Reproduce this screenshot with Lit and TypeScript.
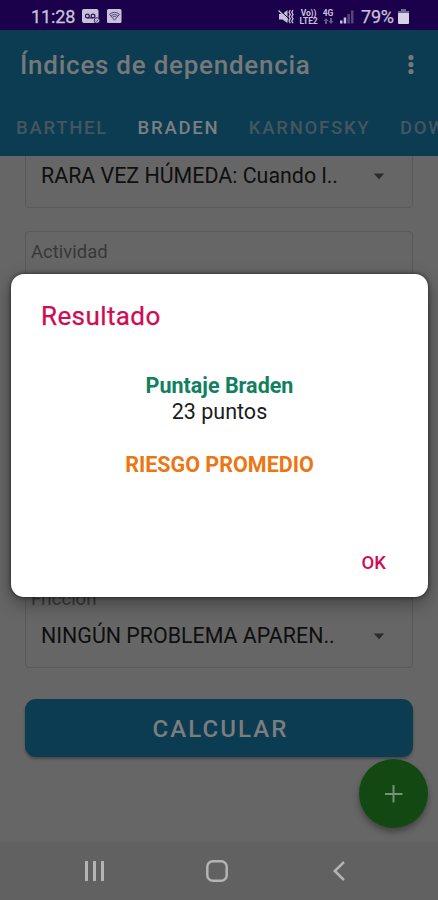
import { LitElement, html, css } from "lit";
import { customElement } from "lit/decorators.js";

@customElement("status-bar")
class StatusBar extends LitElement {
  static styles = css`
    :host { display: flex; height: 30px; background: #1b004b; color: #c9c0da; align-items: center; box-sizing: border-box; padding: 3px 29px 0 31px; font-size: 18px; }
    .time { width: 51px; letter-spacing: -0.1px; -webkit-text-stroke: 0.3px; }
    .left { display: flex; gap: 7px; }
    .right { margin-left: auto; display: flex; align-items: center; }
    .tiny { font-size: 8.5px; line-height: 8px; font-weight: 700; text-align: center; letter-spacing: -0.1px; white-space: nowrap; }
    .tiny span { display: block; height: 8px; }
    .volte { width: 21px; margin-left: 4px; }
    .net { width: 14px; margin-left: 2px; }
    .arrows { opacity: 0.45; display: block; margin: 1px auto 0; }
    .signal { margin-left: 5px; }
    .pct { margin-left: 7px; width: 35px; letter-spacing: -0.2px; -webkit-text-stroke: 0.25px; }
    .battery { margin-left: 2px; }
    svg { display: block; }
  `;
  render() {
    return html`
      <span class="time">11:28</span>
      <div class="left">
        <svg width="18" height="15" viewBox="0 0 18 15">
          <rect width="16.5" height="14" rx="2" fill="#c9c0da" />
          <circle cx="5.400" cy="7" r="1.900" fill="none" stroke="#2b155a" stroke-width="1.200" />
          <circle cx="11" cy="7" r="1.900" fill="none" stroke="#2b155a" stroke-width="1.200" />
          <path d="M5.400 8.900H11" stroke="#2b155a" stroke-width="1.100" />
          <circle cx="15" cy="11.500" r="2.800" fill="#c9c0da" stroke="#1b004b" stroke-width=".8" />
          <path d="M13.800 11.500l1 1 1.500-2" fill="none" stroke="#2b155a" stroke-width=".7" />
        </svg>
        <svg width="15" height="15" viewBox="0 0 15 15">
          <rect width="14.500" height="14" rx="1.500" fill="#c9c0da" />
          <path d="M2.500 5.300q5-4 10 0L7.500 11.200zM4.300 6.500q3.200-2.300 6.400 0M5.700 8q1.800-1.200 3.600 0" fill="none" stroke="#55427b" stroke-width="1" />
        </svg>
      </div>
      <div class="right">
        <svg width="16" height="15" viewBox="0 0 16 15" fill="none" stroke="#c9c0da">
          <path d="M1 5h3.500L9.500 1v13L4.500 10.500H1z" fill="#c9c0da" stroke="none" />
          <path d="M2 1.200l8 7.600" stroke="#1b004b" stroke-width="1" />
          <path d="M.6 1.500l9.500 9.500" stroke-width="1.300" />
          <path d="M12.300 1l-1.200 2.200 1.200 2.200-1.200 2.200 1.200 2.200-1.200 2.200 1.200 2.200M15 1l-1.200 2.200L15 5.400l-1.200 2.200L15 9.800l-1.200 2.200L15 14.200" stroke-width="1.300" />
        </svg>
        <div class="tiny volte"><span>Vo))</span><span>LTE2</span></div>
        <div class="tiny net"><span>4G</span>
          <svg class="arrows" width="11" height="6" viewBox="0 0 11 6" fill="#c9c0da"><path d="M3 0l2.500 3H4v3H2V3H.5zM8 6L5.500 3H7V0h2v3h1.500z" /></svg>
        </div>
        <svg class="signal" width="14" height="14" viewBox="0 0 14 14" fill="#c9c0da">
          <rect x="0" y="10.500" width="2.500" height="3" /><rect x="3.700" y="7.500" width="2.500" height="6" />
          <rect x="7.400" y="4" width="2.500" height="9.500" opacity=".35" /><rect x="11" y="0.500" width="2.500" height="13" opacity=".35" />
        </svg>
        <span class="pct">79%</span>
        <svg class="battery" width="11" height="15" viewBox="0 0 11 15">
          <path d="M3 0h5v2h3v3H0V2h3z" fill="#75668f" /><rect y="4" width="11" height="11" rx="1" fill="#d8d0e6" />
        </svg>
      </div>`;
  }
}

@customElement("select-field")
class SelectField extends LitElement {
  static properties = { label: {}, value: {} };
  declare label: string;
  declare value: string;
  static styles = css`
    :host { display: flex; flex-direction: column; box-sizing: border-box; height: 90px; border: 1.500px solid #595959; border-radius: 4px; padding: 8px 27px 0 5px; color: #0f0f0f; }
    .label { font-size: 18.500px; line-height: 24px; height: 24px; color: #383838; }
    .row { display: flex; align-items: center; justify-content: space-between; padding-left: 10px; margin-top: 11px; font-size: 21.400px; line-height: 28px; white-space: nowrap; }
    svg { display: block; }
  `;
  render() {
    return html`
      <div class="label">${this.label}</div>
      <div class="row"><span>${this.value}</span>
        <svg width="12" height="7" viewBox="0 0 12 7"><path d="M.8.5h10.400L6 6.200z" fill="#2b2b2b" /></svg>
      </div>`;
  }
}

@customElement("result-dialog")
class ResultDialog extends LitElement {
  static styles = css`
    :host { display: flex; flex-direction: column; box-sizing: border-box; width: 417px; height: 323px; background: #fff; border-radius: 13px; padding: 25px 42px 20px 30px; box-shadow: 0 7px 18px rgba(0,0,0,.35), 0 0 4px rgba(0,0,0,.6); }
    .title { font-size: 26px; line-height: 34px; color: #cf0b52; letter-spacing: 0.400px; -webkit-text-stroke: 0.250px; }
    .body { text-align: center; font-size: 21.500px; line-height: 26.400px; margin: 40px -12px 0 0; color: #1c1c1c; }
    .strong { font-weight: 700; color: #11805f; }
    .risk { font-weight: 700; color: #ed7614; margin-top: 26.400px; }
    .ok { margin-top: auto; align-self: flex-end; font-size: 18.500px; line-height: 28px; font-weight: 500; color: #cf0b52; }
  `;
  render() {
    return html`
      <div class="title">Resultado</div>
      <div class="body">
        <div class="strong">Puntaje Braden</div>
        <div class="points">23 puntos</div>
        <div class="risk">RIESGO PROMEDIO</div>
      </div>
      <div class="ok">OK</div>`;
  }
}

@customElement("app-root")
class AppRoot extends LitElement {
  static styles = css`
    :host { display: flex; flex-direction: column; position: relative; width: 438px; height: 900px; overflow: hidden; background: #666; font-family: Roboto, "Liberation Sans", sans-serif; }
    .header { height: 126px; background: #0c3c52; color: #777879; display: flex; flex-direction: column; }
    .bar { display: flex; justify-content: space-between; align-items: center; height: 70px; padding: 0 24px 0 20px; font-size: 26px; font-weight: 500; }
    .title { letter-spacing: 0.740px; }
    .tabs { display: flex; gap: 29.500px; padding-left: 16px; height: 56px; align-items: center; font-size: 18.500px; font-weight: 500; letter-spacing: 1.750px; white-space: nowrap; overflow: hidden; }
    .tab { color: #44565f; }
    .tab.active { color: #7d7f80; }
    .content { flex: 1; display: flex; flex-direction: column; gap: 23px; padding: 0 25px; overflow: hidden; min-height: 0; }
    select-field { flex: none; }
    .first { margin-top: -38px; }
    .last { margin-top: 234px; }
    .button { flex: none; margin-top: 8px; height: 58px; box-sizing: border-box; padding: 2px 0 0 3px; border-radius: 11px; background: #0c3c52; color: #7b7d7e; display: flex; align-items: center; justify-content: center; font-size: 24px; font-weight: 500; letter-spacing: 2.050px; box-shadow: 0 2px 3px rgba(0,0,0,.3); }
    .nav { height: 58px; background: #616161; display: flex; align-items: center; padding: 0 0 0 83px; gap: 101px; box-sizing: border-box; }
    .back { margin-left: 3px; }
    .fab { position: absolute; left: 359px; top: 759px; width: 69px; height: 69px; border-radius: 50%; background: #124812; display: flex; align-items: center; justify-content: center; box-shadow: 0 4px 6px rgba(0,0,0,.35); }
    result-dialog { position: absolute; left: 11px; top: 274px; }
    svg { display: block; }
  `;
  render() {
    return html`
      <status-bar></status-bar>
      <div class="header">
        <div class="bar"><span class="title">Índices de dependencia</span>
          <svg width="6" height="20" viewBox="0 0 6 20" fill="#777879"><circle cx="3" cy="2.500" r="2.600" /><circle cx="3" cy="9.500" r="2.600" /><circle cx="3" cy="16.500" r="2.600" /></svg>
        </div>
        <div class="tabs">
          <span class="tab">BARTHEL</span><span class="tab active">BRADEN</span><span class="tab">KARNOFSKY</span><span class="tab">DOW</span>
        </div>
      </div>
      <div class="content">
        <select-field class="first" label="" value="RARA VEZ HÚMEDA: Cuando l.."></select-field>
        <select-field label="Actividad" value=""></select-field>
        <select-field class="last" label="Fricción" value="NINGÚN PROBLEMA APAREN.."></select-field>
        <div class="button">CALCULAR</div>
      </div>
      <div class="nav">
        <svg width="22" height="22" viewBox="0 0 22 22" fill="none" stroke="#b4b4b4" stroke-width="3"><path d="M3.500 1v20M11.500 1v20M19.500 1v20" /></svg>
        <svg width="22" height="22" viewBox="0 0 22 22" fill="none" stroke="#b4b4b4" stroke-width="2.500"><rect x="1.300" y="1.300" width="19.400" height="19.400" rx="5.500" /></svg>
        <svg class="back" width="13" height="20" viewBox="-1 0 13 20" fill="none" stroke="#b4b4b4" stroke-width="2.500"><path d="M11 1L1.800 10 11 19" /></svg>
      </div>
      <div class="fab"><svg width="18" height="18" viewBox="0 0 18 18" stroke="#779077" stroke-width="2"><path d="M8.500 0v17.500M0 9h17.500" /></svg></div>
      <result-dialog></result-dialog>`;
  }
}
